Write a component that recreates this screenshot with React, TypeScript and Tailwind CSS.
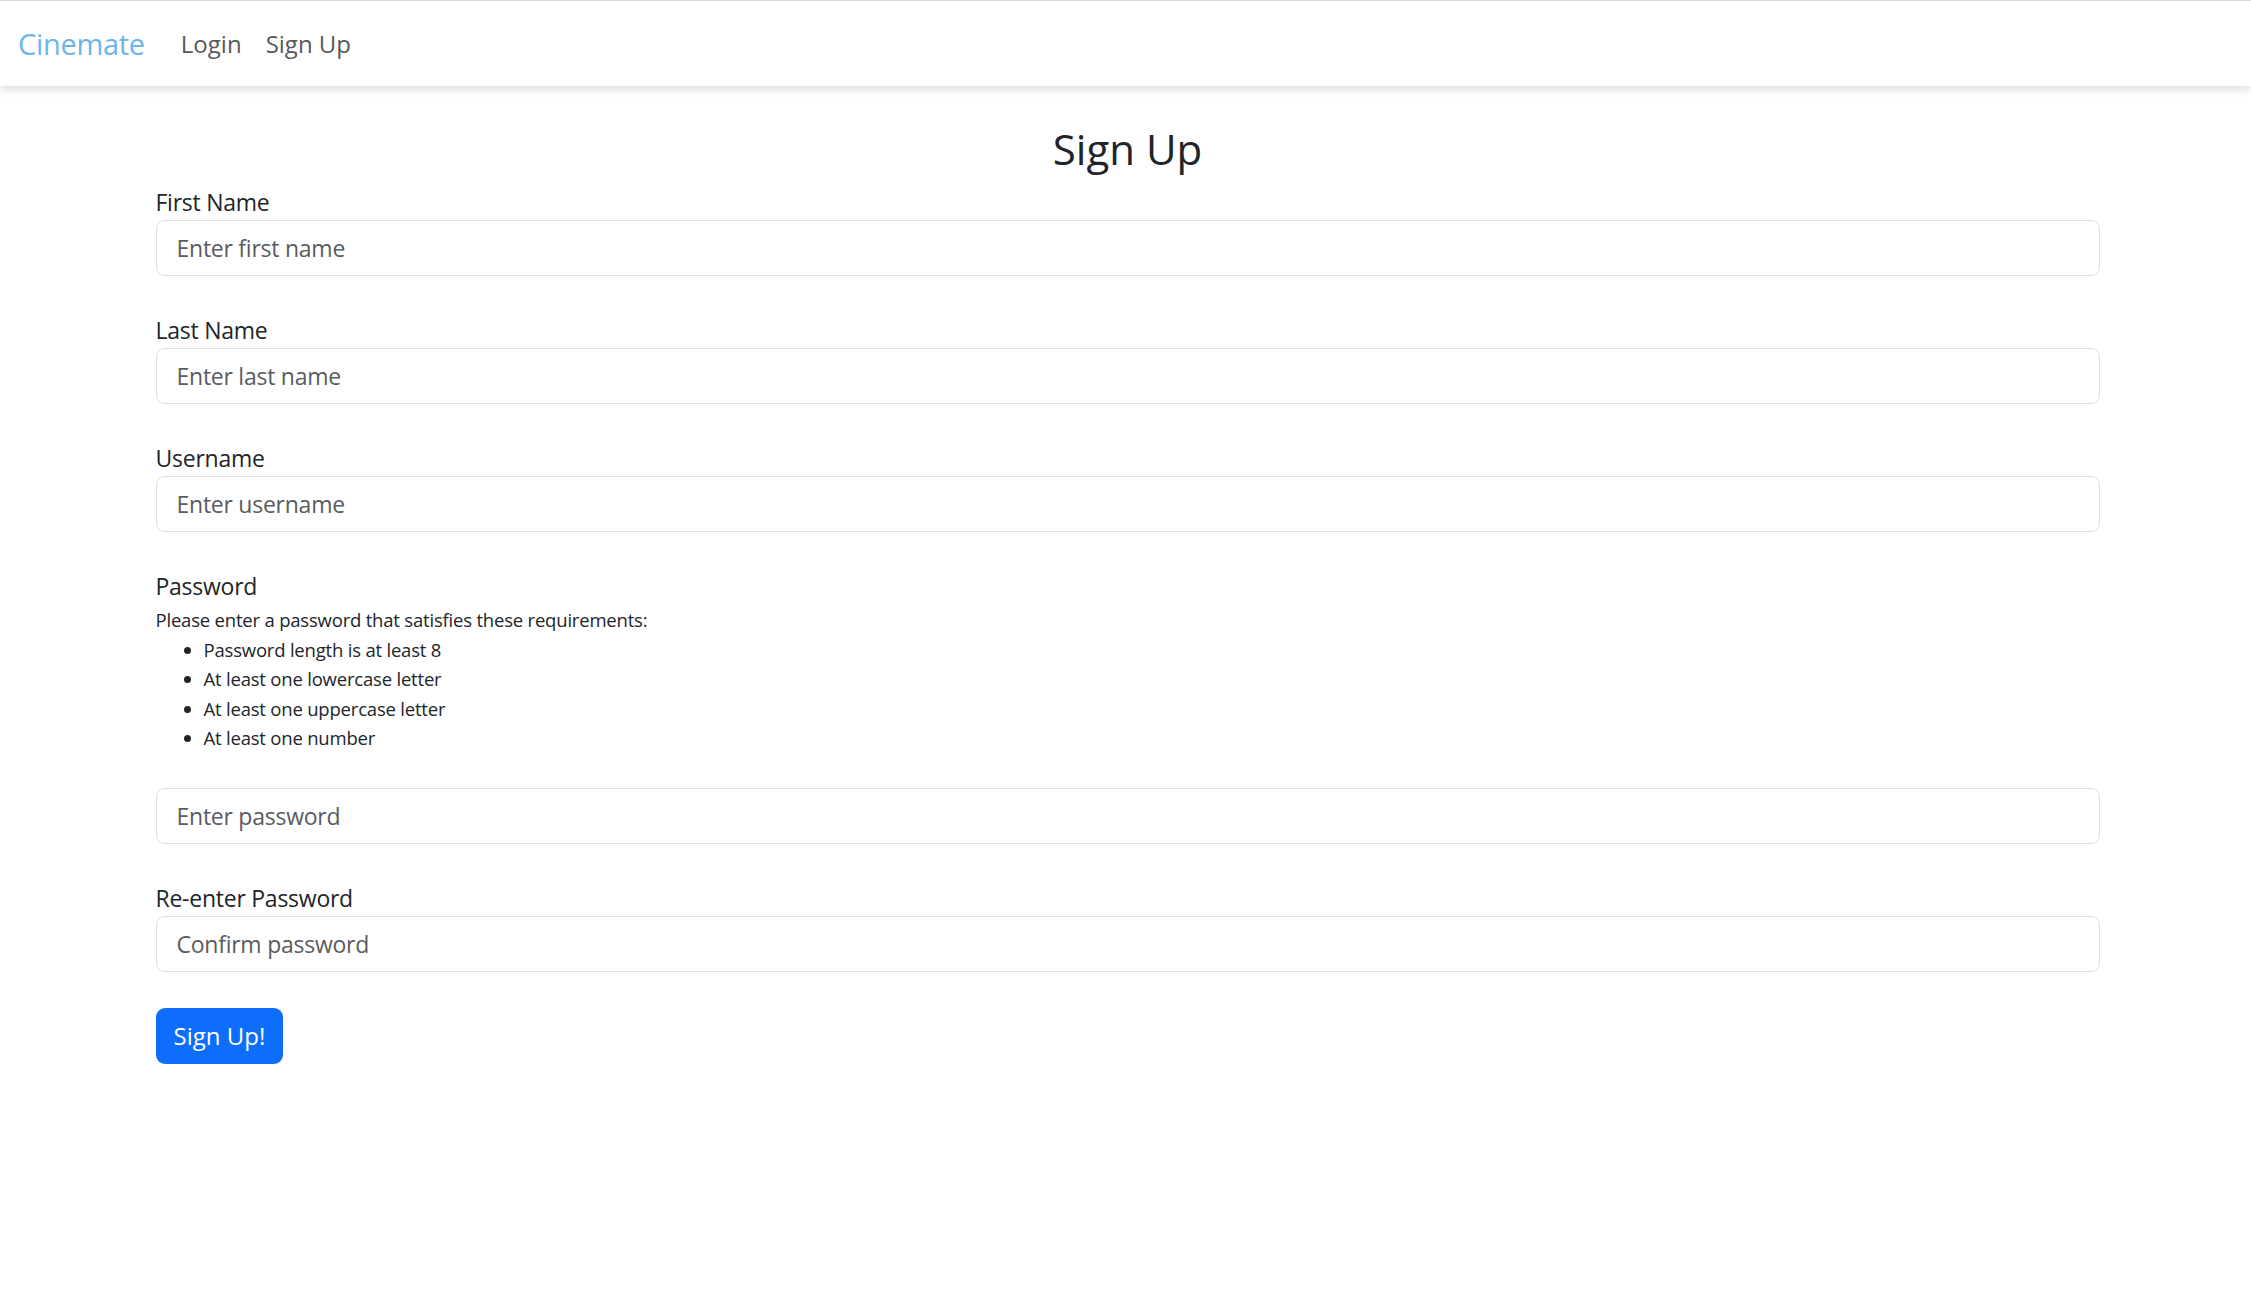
import React from 'react';

const fields = [
  { label: 'First Name', placeholder: 'Enter first name', type: 'text' },
  { label: 'Last Name', placeholder: 'Enter last name', type: 'text' },
  { label: 'Username', placeholder: 'Enter username', type: 'text' },
];

const rules = [
  'Password length is at least 8',
  'At least one lowercase letter',
  'At least one uppercase letter',
  'At least one number',
];

const labelClass = 'block text-[23px] tracking-[-0.25px] leading-[36px]';

const inputClass =
  'block w-full h-[56px] px-[20px] text-[23px] tracking-[-0.25px] text-[#212529] bg-white border border-[#dee2e6] rounded-[9px] outline-none placeholder:text-[#595c5f]';

export default function App() {
  return (
    <div className="min-h-screen bg-white text-[#212529] font-['Open_Sans','Noto_Sans',sans-serif]">
      {/* Navbar */}
      <nav className="h-[86px] border-t border-[#dcdcdc] bg-white shadow-[0_4px_8px_rgba(0,0,0,0.12)] flex items-center px-[18px]">
        <a href="#" className="text-[29px] tracking-[-0.3px] text-[#6cb4ee] mr-[24px] leading-none">Cinemate</a>
        <a href="#" className="text-[24px] text-[#595959] px-[12px] leading-none">Login</a>
        <a href="#" className="text-[24px] text-[#595959] px-[12px] leading-none">Sign Up</a>
      </nav>

      {/* Form */}
      <div className="max-w-[1980px] mx-auto pl-[20px] pr-[16px]">
        <h3 className="mt-[38px] mb-[10px] text-center text-[42px] leading-[50px] font-medium">Sign Up</h3>
        <form onSubmit={e => e.preventDefault()}>
          {fields.map(f => (
            <div key={f.label} className="mb-[36px]">
              <label className={labelClass}>{f.label}</label>
              <input type={f.type} placeholder={f.placeholder} className={inputClass} />
            </div>
          ))}

          <div className="mb-[36px]">
            <label className={labelClass}>Password</label>
            <div className="text-[18.5px] tracking-[-0.2px] leading-[31px]">
              Please enter a password that satisfies these requirements:
            </div>
            <ul className="list-disc pl-[48px] text-[18.5px] tracking-[-0.2px] leading-[29.3px] mb-[36px]">
              {rules.map(r => (
                <li key={r}>{r}</li>
              ))}
            </ul>
            <input type="password" placeholder="Enter password" className={inputClass} />
          </div>

          <div className="mb-[36px]">
            <label className={labelClass}>Re-enter Password</label>
            <input type="password" placeholder="Confirm password" className={inputClass} />
          </div>

          <button type="submit" className="h-[56px] px-[18px] text-[24px] text-white bg-[#0d6efd] rounded-[9px]">
            Sign Up!
          </button>
        </form>
      </div>
    </div>
  );
}
